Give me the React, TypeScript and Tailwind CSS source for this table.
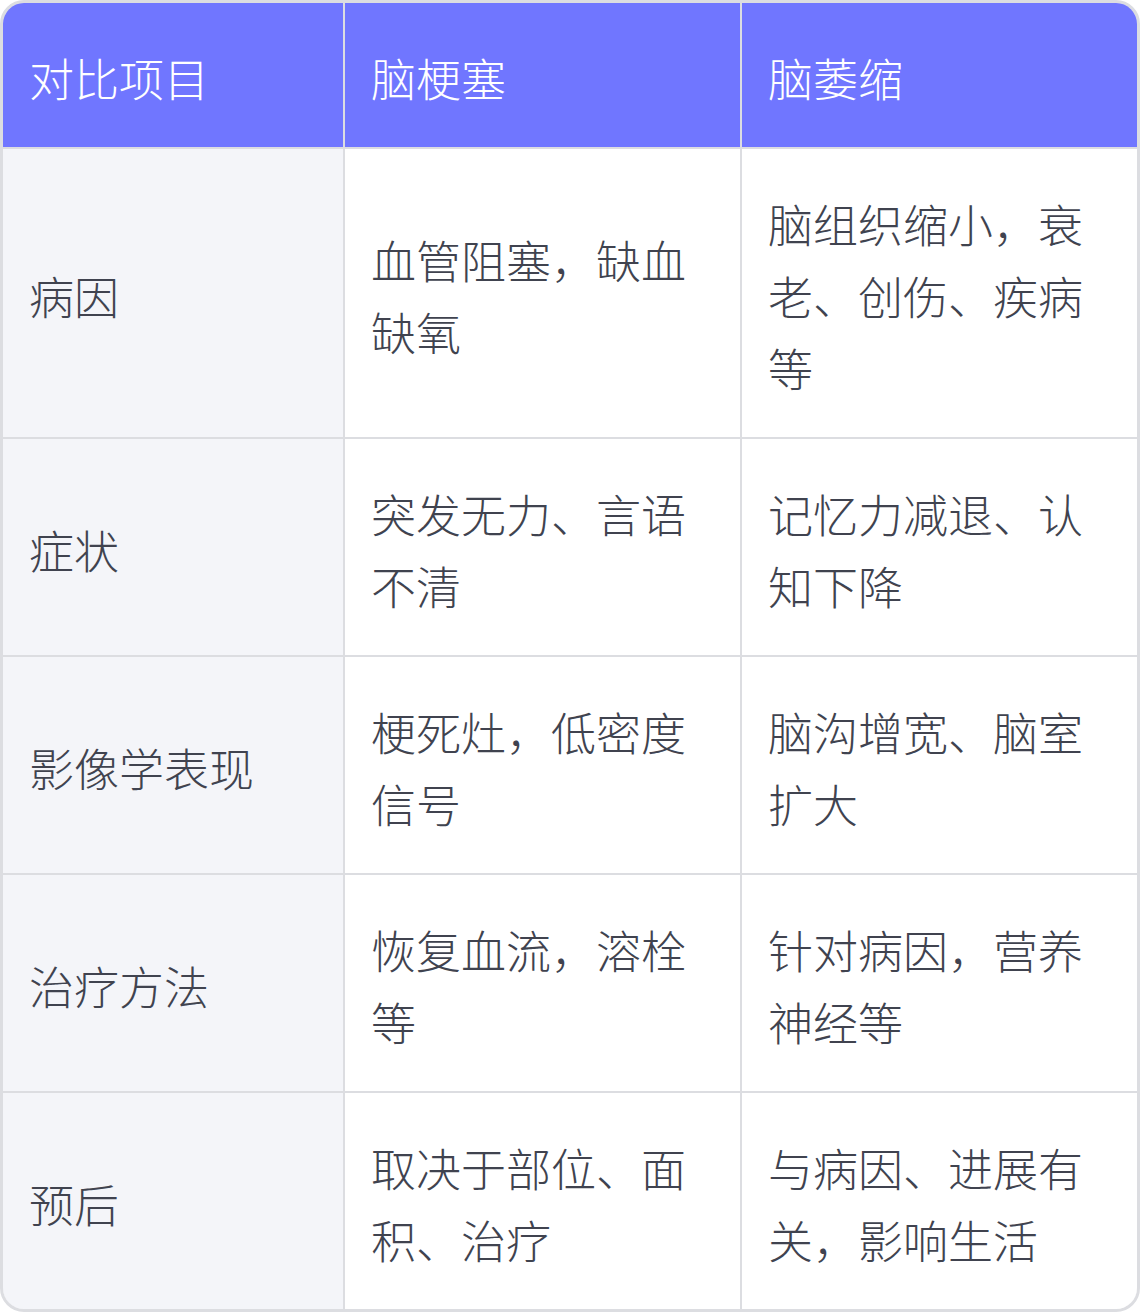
const header = ['对比项目', '脑梗塞', '脑萎缩'];

const rows: [string, string, string][] = [
  ['病因', '血管阻塞，缺血缺氧', '脑组织缩小，衰老、创伤、疾病等'],
  ['症状', '突发无力、言语不清', '记忆力减退、认知下降'],
  ['影像学表现', '梗死灶，低密度信号', '脑沟增宽、脑室扩大'],
  ['治疗方法', '恢复血流，溶栓等', '针对病因，营养神经等'],
  ['预后', '取决于部位、面积、治疗', '与病因、进展有关，影响生活'],
];

export default function App() {
  return (
    <div
      className="w-[1140px] bg-white"
      style={{ fontFamily: '"Noto Sans CJK SC", "Noto Sans", sans-serif' }}
    >
      <div className="border-[3px] border-[#dcdde1] rounded-[24px] overflow-hidden">
        <div className="grid grid-cols-[340px_395px_395px] gap-[2px] bg-[#dcdde1] text-[45px] leading-[72px] font-light">
          {header.map((h) => (
            <div key={h} className="bg-[#7076ff] text-white pl-[26px] pr-[28px] pt-[39px] pb-[33px]">
              {h}
            </div>
          ))}
          {rows.map((r) => (
            <div key={r[0]} className="contents">
              <div className="bg-[#f4f5f9] text-[#40434f] pl-[26px] pr-[28px] pt-[39px] pb-[33px] flex items-center">
                {r[0]}
              </div>
              <div className="bg-white text-[#40434f] pl-[26px] pr-[28px] pt-[39px] pb-[33px] flex items-center">
                {r[1]}
              </div>
              <div className="bg-white text-[#40434f] pl-[26px] pr-[28px] pt-[39px] pb-[33px] flex items-center">
                {r[2]}
              </div>
            </div>
          ))}
        </div>
      </div>
    </div>
  );
}
